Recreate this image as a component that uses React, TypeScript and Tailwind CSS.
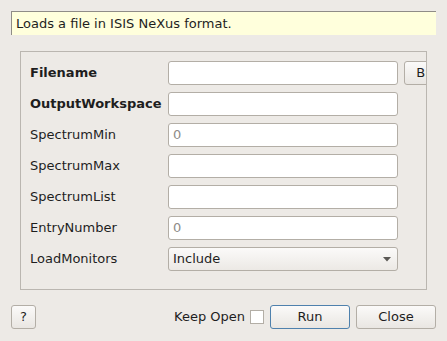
import { ReactNode } from "react";

const rows: { label: string; bold?: boolean; value?: string; kind?: "combo" }[] = [
  { label: "Filename", bold: true },
  { label: "OutputWorkspace", bold: true },
  { label: "SpectrumMin", value: "0" },
  { label: "SpectrumMax" },
  { label: "SpectrumList" },
  { label: "EntryNumber", value: "0" },
  { label: "LoadMonitors", value: "Include", kind: "combo" },
];

function Button({ children, className }: { children: ReactNode; className?: string }) {
  return (
    <div
      className={
        "flex h-[24px] items-center justify-center rounded-[3px] border bg-gradient-to-b from-[#fbfaf9] to-[#e9e6e2] text-[13px] text-[#1e1e1e] " +
        (className ?? "border-[#b3aea6]")
      }
    >
      {children}
    </div>
  );
}

export default function App() {
  return (
    <div
      className="h-[341px] w-[447px] overflow-hidden bg-[#edeae6] pt-[11px] text-[13px] text-[#1e1e1e]"
      style={{ fontFamily: '"DejaVu Sans", sans-serif' }}
    >
      {/* Description */}
      <div className="mx-[11px] flex h-[24px] items-center border-l border-t border-[#8f8c87] bg-[#ffffdc] pl-[4px]">
        Loads a file in ISIS NeXus format.
      </div>

      {/* Properties (clipped like the scroll area in the original) */}
      <div className="ml-[20px] mt-[16px] h-[239px] w-[407px] overflow-hidden border border-[#bab6b0]">
        <div className="flex w-[480px] flex-col gap-[7px] pl-[9px] pt-[9px]">
          {rows.map((row) => (
            <div key={row.label} className="flex h-[24px] items-center">
              <div className={"w-[138px] " + (row.bold ? "font-bold" : "")}>{row.label}</div>
              {row.kind === "combo" ? (
                <div className="flex h-[24px] w-[230px] items-center justify-between rounded-[3px] border border-[#b3aea6] bg-gradient-to-b from-[#fbfaf9] to-[#ece9e5] pl-[4px] pr-[6px]">
                  <span>{row.value}</span>
                  <svg width="8" height="5" viewBox="0 0 8 5">
                    <path d="M0 0H8L4 4.5Z" fill="#5a5854" />
                  </svg>
                </div>
              ) : (
                <div className="flex h-[24px] w-[230px] items-center rounded-[3px] border border-[#b3aea6] bg-white pl-[4px] text-[#8e8c88]">
                  {row.value}
                </div>
              )}
              {row.label === "Filename" && (
                <div className="ml-[6px] w-[72px]">
                  <Button>Browse</Button>
                </div>
              )}
            </div>
          ))}
        </div>
      </div>

      {/* Footer */}
      <div className="ml-[11px] mr-[11px] mt-[15px] flex items-center">
        <Button className="w-[25px] border-[#b3aea6]">?</Button>
        <div className="flex-1" />
        <span className="mr-[5px]">Keep Open</span>
        <div className="mr-[6px] h-[14px] w-[14px] border border-[#b3aea6] bg-white" />
        <Button className="w-[80px] border-[#4f81ad]">Run</Button>
        <Button className="ml-[6px] w-[80px] border-[#b3aea6]">Close</Button>
      </div>
    </div>
  );
}
